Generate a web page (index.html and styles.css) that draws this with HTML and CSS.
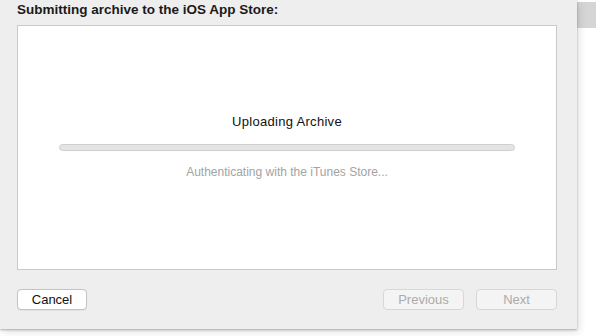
FILE: index.html
```html
<!DOCTYPE html>
<html>
<head>
<meta charset="utf-8">
<link rel="stylesheet" href="styles.css">
</head>
<body>
<div class="screen">
  <div class="sheet">
    <div class="title">Submitting archive to the iOS App Store:</div>
    <div class="panel">
      <div class="status">Uploading Archive</div>
      <div class="progress"></div>
      <div class="detail">Authenticating with the iTunes Store...</div>
    </div>
    <div class="footer">
      <button class="btn">Cancel</button>
      <div class="spacer"></div>
      <button class="btn disabled prev">Previous</button>
      <button class="btn disabled next">Next</button>
    </div>
  </div>
  <div class="side">
    <div class="side-bar"></div>
  </div>
</div>
</body>
</html>
```

FILE: styles.css
```css
html, body {
  margin: 0;
  padding: 0;
  background: #ffffff;
  font-family: "Liberation Sans", Arial, sans-serif;
}
.screen {
  display: flex;
  width: 596px;
  height: 336px;
  overflow: hidden;
}
.sheet {
  position: relative;
  z-index: 1;
  width: 577px;
  height: 329px;
  flex: none;
  box-sizing: border-box;
  background: #eeeeee;
  box-shadow: 0 1px 2px rgba(0,0,0,0.28), 2px 3px 8px rgba(0,0,0,0.12);
  padding: 0 20px 0 17px;
  display: flex;
  flex-direction: column;
}
.title {
  font-size: 13.5px;
  font-weight: bold;
  color: #1a1a1a;
  height: 25px;
  line-height: 20px;
}
.panel {
  height: 245px;
  box-sizing: border-box;
  border: 1px solid #c9c9c9;
  background: #ffffff;
  display: flex;
  flex-direction: column;
  align-items: center;
  padding: 88px 41px 0 41px;
}
.status {
  font-size: 13px;
  letter-spacing: 0.3px;
  color: #111111;
  line-height: 16px;
  height: 16px;
}
.progress {
  margin-top: 14px;
  align-self: stretch;
  height: 7px;
  box-sizing: border-box;
  border: 1px solid #cfcfcf;
  border-radius: 4px;
  background: #e4e4e4;
}
.detail {
  margin-top: 14px;
  font-size: 12px;
  color: #a3a3a3;
  line-height: 14px;
}
.footer {
  margin-top: 19px;
  display: flex;
  align-items: center;
}
.spacer { flex: 1; }
.btn {
  font-family: "Liberation Sans", Arial, sans-serif;
  font-size: 13px;
  height: 21px;
  box-sizing: border-box;
  padding: 0;
  border: 1px solid #c3c3c3;
  border-radius: 4px;
  background: #ffffff;
  color: #111111;
  line-height: 19px;
  width: 70px;
  box-shadow: 0 0.5px 0 rgba(0,0,0,0.08);
}
.btn.disabled {
  background: #f4f4f4;
  border-color: #d7d7d7;
  color: #ababab;
  box-shadow: none;
}
.prev { width: 81px; }
.next { width: 81px; margin-left: 12px; }
.side {
  flex: 1;
  background: #ffffff;
  padding-top: 2px;
}
.side-bar {
  height: 26px;
  background: #d5d5d5;
}
```
